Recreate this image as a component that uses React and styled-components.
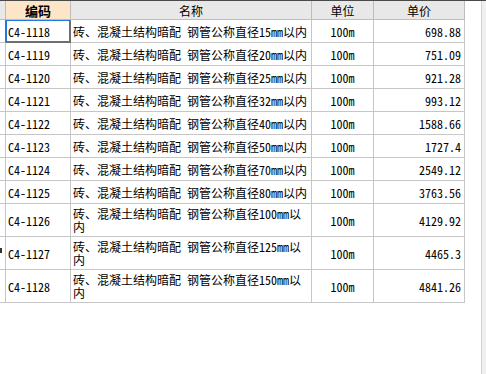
import React from "react";
import styled, { createGlobalStyle, css } from "styled-components";

const Global = createGlobalStyle`
  html, body, #root { margin: 0; padding: 0; height: 100%; background: #fff; }
  body {
    font-family: "Noto Sans Mono CJK SC", "Noto Sans CJK SC", "Liberation Mono", monospace;
    font-size: 12px;
    color: #000;
  }
`;

const Page = styled.div`
  display: flex;
  flex-direction: column;
  height: 100%;
  border-top: 1px solid #4a4a4a;
  box-sizing: border-box;
`;

const Main = styled.div`
  flex: 1;
  display: flex;
  min-height: 0;
`;

const TableArea = styled.div`
  flex: 1;
  background: #fff;
`;

const SideStrip = styled.div`
  width: 5px;
  box-sizing: border-box;
  border-left: 1px solid #d2d2d2;
  background: #f0f0f0;
`;

const Grid = styled.div`
  display: grid;
  grid-template-columns: 6px 65px 241px 62px 91px;
  width: 465px;
`;

const Cell = styled.div`
  box-sizing: border-box;
  border-right: 1px solid #c6c6c6;
  border-bottom: 1px solid #c6c6c6;
  height: ${(p) => (p.$tall ? 33 : 23)}px;
  display: flex;
  align-items: center;
  line-height: 13px;
  white-space: normal;
  overflow: hidden;
  justify-content: ${(p) =>
    p.$align === "right" ? "flex-end" : p.$align === "center" ? "center" : "flex-start"};
  padding: ${(p) => (p.$align === "right" ? "0 3px 0 0" : p.$align === "center" ? "0" : "0 0 0 2px")};
`;

const HeadCell = styled.div`
  box-sizing: border-box;
  height: 19px;
  border-right: 1px solid #bdbdbd;
  border-bottom: 1px solid #bdbdbd;
  background: ${(p) => (p.$active ? "#fde6c8" : "#e8e8e8")};
  display: flex;
  align-items: center;
  justify-content: center;
  font-family: "Noto Sans CJK SC", sans-serif;
  font-size: ${(p) => (p.$active ? "13px" : "12px")};
  font-weight: ${(p) => (p.$active ? 700 : 400)};
  line-height: 13px;
`;

const RowHead = styled.div`
  position: relative;
  box-sizing: border-box;
  height: ${(p) => (p.$tall ? 33 : 23)}px;
  border-right: ${(p) => (p.$selected ? "1px solid #1f78e4" : "1px solid #c6c6c6")};
  border-bottom: 1px solid #c6c6c6;
`;

const Marker = styled.span`
  position: absolute;
  left: 0;
  top: 11px;
  width: 2px;
  height: 5px;
  background: #333;
`;

const CodeCell = styled(Cell)`
  ${(p) =>
    p.$selected &&
    css`
      border-right-color: #6e6e6e;
      border-bottom-color: #6e6e6e;
      box-shadow: inset 1px 0 0 #1f78e4, inset 0 1px 0 #1f78e4, inset -1px 0 0 #6e6e6e,
        inset 0 -1px 0 #6e6e6e;
    `}
`;

const NameText = styled.span`
  display: block;
`;

const rows = [
  ["C4-1118", "15", "698.88"],
  ["C4-1119", "20", "751.09"],
  ["C4-1120", "25", "921.28"],
  ["C4-1121", "32", "993.12"],
  ["C4-1122", "40", "1588.66"],
  ["C4-1123", "50", "1727.4"],
  ["C4-1124", "70", "2549.12"],
  ["C4-1125", "80", "3763.56"],
  ["C4-1126", "100", "4129.92"],
  ["C4-1127", "125", "4465.3"],
  ["C4-1128", "150", "4841.26"],
];

export default function App() {
  return (
    <>
      <Global />
      <Page>
        <Main>
          <TableArea>
            <Grid>
              <HeadCell />
              <HeadCell $active>编码</HeadCell>
              <HeadCell>名称</HeadCell>
              <HeadCell>单位</HeadCell>
              <HeadCell>单价</HeadCell>
              {rows.map(([code, dia, price], i) => {
                const tall = dia.length > 2;
                const selected = i === 0;
                return (
                  <React.Fragment key={code}>
                    <RowHead $tall={tall} $selected={selected}>
                      {code === "C4-1127" && <Marker />}
                    </RowHead>
                    <CodeCell $tall={tall} $selected={selected}>
                      {code}
                    </CodeCell>
                    <Cell $tall={tall}>
                      <NameText>{`砖、混凝土结构暗配 钢管公称直径${dia}mm以内`}</NameText>
                    </Cell>
                    <Cell $tall={tall} $align="center">
                      100m
                    </Cell>
                    <Cell $tall={tall} $align="right">
                      {price}
                    </Cell>
                  </React.Fragment>
                );
              })}
            </Grid>
          </TableArea>
          <SideStrip />
        </Main>
      </Page>
    </>
  );
}
